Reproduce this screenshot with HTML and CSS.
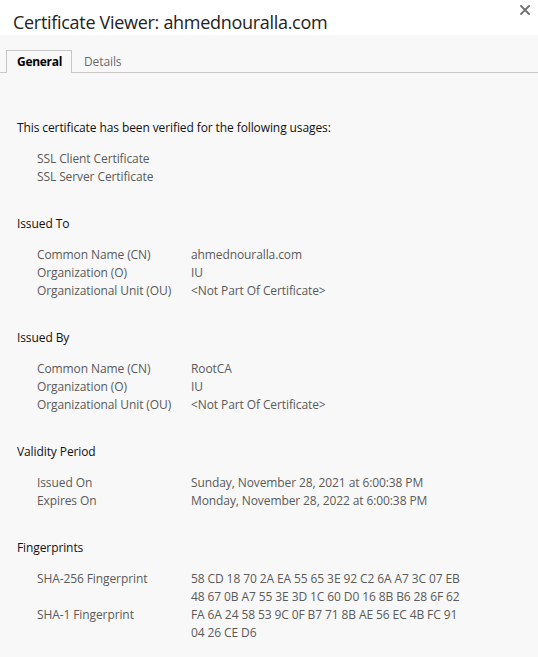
FILE: index.html
```html
<!DOCTYPE html>
<html>
<head>
<meta charset="utf-8">
<link rel="stylesheet" href="styles.css">
</head>
<body>
<div class="dialog">
  <header class="titlebar">
    <h1 class="title">Certificate Viewer: ahmednouralla.com</h1>
    <button class="close" aria-label="Close">
      <svg width="10" height="10" viewBox="0 0 10 10"><path d="M1 1L9 9M9 1L1 9" stroke="#6e6e6e" stroke-width="1.8" stroke-linecap="square"/></svg>
    </button>
  </header>
  <nav class="tabs">
    <span class="tab active">General</span>
    <span class="tab">Details</span>
  </nav>
  <main class="content">
    <section class="section">
      <p class="heading">This certificate has been verified for the following usages:</p>
      <div class="rows">
        <div class="row"><span class="label">SSL Client Certificate</span></div>
        <div class="row"><span class="label">SSL Server Certificate</span></div>
      </div>
    </section>
    <section class="section">
      <p class="heading">Issued To</p>
      <div class="rows">
        <div class="row"><span class="label">Common Name (CN)</span><span class="value">ahmednouralla.com</span></div>
        <div class="row"><span class="label">Organization (O)</span><span class="value">IU</span></div>
        <div class="row"><span class="label">Organizational Unit (OU)</span><span class="value">&lt;Not Part Of Certificate&gt;</span></div>
      </div>
    </section>
    <section class="section">
      <p class="heading">Issued By</p>
      <div class="rows">
        <div class="row"><span class="label">Common Name (CN)</span><span class="value">RootCA</span></div>
        <div class="row"><span class="label">Organization (O)</span><span class="value">IU</span></div>
        <div class="row"><span class="label">Organizational Unit (OU)</span><span class="value">&lt;Not Part Of Certificate&gt;</span></div>
      </div>
    </section>
    <section class="section">
      <p class="heading">Validity Period</p>
      <div class="rows">
        <div class="row"><span class="label">Issued On</span><span class="value">Sunday, November 28, 2021 at 6:00:38 PM</span></div>
        <div class="row"><span class="label">Expires On</span><span class="value">Monday, November 28, 2022 at 6:00:38 PM</span></div>
      </div>
    </section>
    <section class="section">
      <p class="heading">Fingerprints</p>
      <div class="rows">
        <div class="row"><span class="label">SHA-256 Fingerprint</span><span class="value">58 CD 18 70 2A EA 55 65 3E 92 C2 6A A7 3C 07 EB<br>48 67 0B A7 55 3E 3D 1C 60 D0 16 8B B6 28 6F 62</span></div>
        <div class="row"><span class="label">SHA-1 Fingerprint</span><span class="value">FA 6A 24 58 53 9C 0F B7 71 8B AE 56 EC 4B FC 91<br>04 26 CE D6</span></div>
      </div>
    </section>
  </main>
</div>
</body>
</html>
```
FILE: styles.css
```css
html, body {
  margin: 0;
  padding: 0;
  background: #f8f8f8;
}
body {
  font-family: "Open Sans", "Noto Sans", sans-serif;
  font-size: 12px;
  letter-spacing: -0.1px;
  color: #000;
  width: 538px;
  height: 657px;
  overflow: hidden;
}
.titlebar {
  background: #fff;
  height: 35px;
  display: flex;
  align-items: flex-start;
  justify-content: space-between;
}
.title {
  margin: 0;
  padding: 10px 0 0 13px;
  font-size: 18px;
  font-weight: normal;
  line-height: 24px;
  letter-spacing: -0.3px;
  color: #222;
}
.close {
  border: 0;
  background: none;
  padding: 0;
  margin: 5px 8px 0 0;
  width: 10px;
  height: 10px;
  display: flex;
}
.tabs {
  display: flex;
  align-items: flex-end;
  padding: 15px 0 0 6px;
  height: 22px;
  border-bottom: 1px solid #c8c8c8;
}
.tab {
  height: 22px;
  line-height: 22px;
  padding: 0 10px 0 11px;
  color: #6b6b6b;
  font-size: 12px;
  border: 1px solid transparent;
  border-bottom: 0;
  box-sizing: border-box;
}
.tab.active {
  color: #000;
  font-weight: bold;
  letter-spacing: -0.3px;
  padding: 0 9px 0 10px;
  border-color: #c8c8c8;
  background: #f8f8f8;
  height: 23px;
  margin-bottom: -1px;
}
.content {
  padding: 46px 0 0 17px;
  display: flex;
  flex-direction: column;
  gap: 29px;
}
.section {
  display: flex;
  flex-direction: column;
  gap: 13px;
}
.heading {
  margin: 0;
  line-height: 18px;
  color: #111;
}
.rows {
  display: flex;
  flex-direction: column;
  padding-left: 20px;
}
.row {
  display: grid;
  grid-template-columns: 154px 1fr;
  line-height: 18px;
  color: #5a5a5a;
}
```
